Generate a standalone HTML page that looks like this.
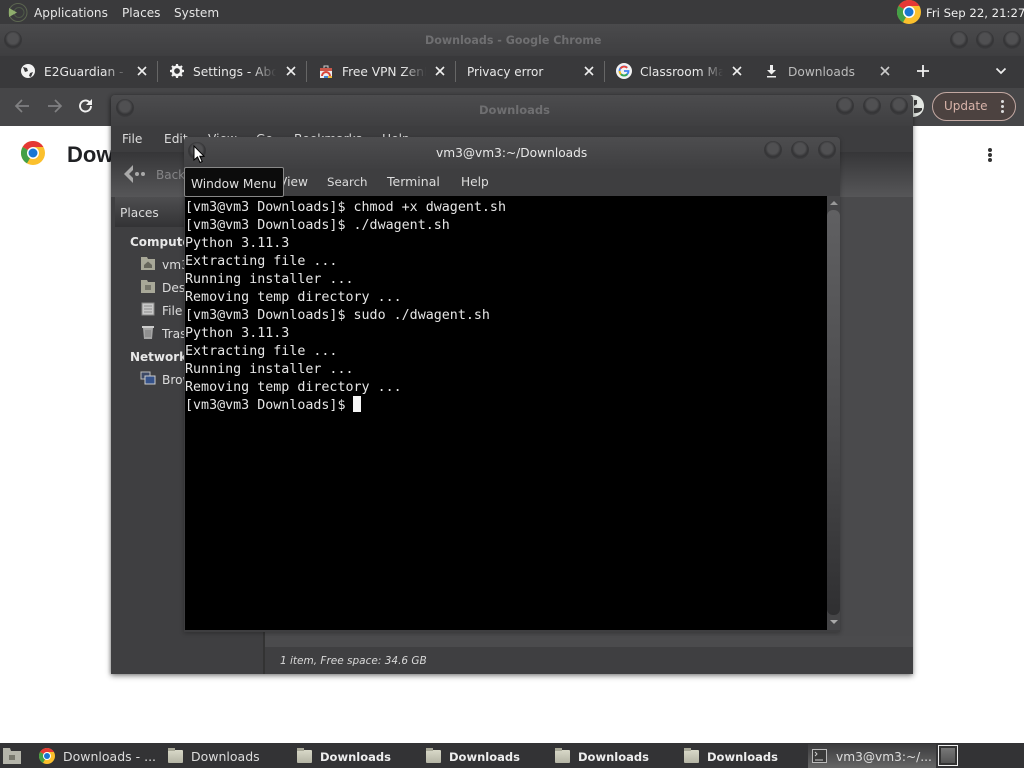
<!DOCTYPE html>
<html><head><meta charset="utf-8"><style>
html,body{margin:0;padding:0;width:1024px;height:768px;overflow:hidden;background:#fff}
body{position:relative;font-family:"Liberation Sans",sans-serif;color:#ddd;font-size:13.5px}
.a,.t{position:absolute}
.t{white-space:nowrap;line-height:18px;margin-top:1px;font-family:"DejaVu Sans",sans-serif;font-size:12px}
.btn{position:absolute;width:18px;height:18px;border-radius:50%;background:radial-gradient(circle at 50% 42%,#505052 0 38%,#343436 58%,#3c3c3e 74%,#4e4e50 100%)}
.tab{color:#e8e8e8;font-size:12.2px;overflow:hidden;-webkit-mask-image:linear-gradient(90deg,#000 70%,transparent 98%);mask-image:linear-gradient(90deg,#000 70%,transparent 98%)}
.x{position:absolute;top:64px;width:14px;height:14px}
.sep{position:absolute;top:61px;width:1px;height:21px;background:#666}
.term{position:absolute;left:185px;font:13.33px/18px "DejaVu Sans Mono",monospace;color:#e6e6e6;white-space:pre;width:640px;overflow:hidden}
.tb{color:#ddd;font-size:12.2px}
.bt{color:#ddd;font-size:12.5px}
.b{font-weight:bold;color:#eee;font-size:11.5px}
.fold{position:absolute;width:15px;height:13px;top:750px;background:linear-gradient(#d8d8c8,#b5b5a5);border-radius:1px}
.fold:before{content:"";position:absolute;left:0;top:-2px;width:7px;height:3px;background:#a8a898}
</style></head><body>

<!-- top panel -->
<div class="a" style="left:0;top:0;width:1024px;height:24px;background:#3a3a3c"></div>
<svg class="a" style="left:7px;top:2px" width="22" height="22" viewBox="0 0 22 22"><circle cx="11" cy="10.500" r="9" fill="none" stroke="#5c6650" stroke-width="1"/><circle cx="12" cy="10.500" r="5" fill="none" stroke="#4e5a48" stroke-width="1"/><path d="M2 6v9l8-4.500z" fill="#8fae6d"/></svg>
<div class="t" style="left:34px;top:3px;color:#e6e6e6;font-size:12.1px">Applications</div>
<div class="t" style="left:122px;top:3px;color:#e6e6e6;font-size:12.1px">Places</div>
<div class="t" style="left:174px;top:3px;color:#e6e6e6;font-size:12.1px">System</div>
<svg class="a" style="left:897px;top:0" width="24" height="24" viewBox="0 0 24 24"><circle cx="12" cy="12" r="12" fill="#fbc02d"/><path d="M12 12 1.600 6A12 12 0 0 1 22.400 6H12z" fill="#e53935"/><path d="M12 12 6 22.400A12 12 0 0 1 1.600 6z" fill="#43a047"/><circle cx="12" cy="12" r="6" fill="#fff"/><circle cx="12" cy="12" r="4.500" fill="#1976d2"/></svg>
<div class="t" style="left:926px;top:3px;color:#f0f0f0;font-size:11.7px">Fri Sep 22, 21:27</div>

<!-- chrome window -->
<div class="a" style="left:0;top:24px;width:1024px;height:36px;background:linear-gradient(#4a4a4c,#3d3d3f)"></div>
<div class="a" style="left:0;top:56px;width:1024px;height:32px;background:#39393b"></div>
<div class="a" style="left:0;top:88px;width:1024px;height:38px;background:#464648"></div>
<div class="btn" style="left:4px;top:31px"></div>
<div class="btn" style="left:950px;top:31px"></div>
<div class="btn" style="left:976px;top:31px"></div>
<div class="btn" style="left:1003px;top:31px"></div>
<div class="t" style="left:425px;top:31px;color:#6f6f71;font-weight:bold;font-size:11.1px">Downloads - Google Chrome</div>

<svg class="a" style="left:21px;top:64px" width="14" height="14" viewBox="0 0 14 14"><circle cx="7" cy="7" r="7" fill="#f2f2f2"/><path d="M2 3l4 1 1 3-3 1zM9 9l3-1-2 5-2-1z" fill="#39393b"/></svg>
<div class="t tab" style="left:44px;top:62px;width:86px">E2Guardian - About</div>
<svg class="x" style="left:135px" viewBox="0 0 14 14"><path d="M3 3l8 8M11 3l-8 8" stroke="#eee" stroke-width="1.600"/></svg>
<div class="sep" style="left:157px"></div>
<svg class="a" style="left:170px;top:64px" width="14" height="14" viewBox="0 0 14 14"><circle cx="7" cy="7" r="4.200" fill="none" stroke="#f2f2f2" stroke-width="2.600"/><path d="M7 0v2.500M7 11.500V14M0 7h2.500M11.500 7H14M2 2l2 2M10 10l2 2M12 2l-2 2M4 10l-2 2" stroke="#f2f2f2" stroke-width="2.200"/></svg>
<div class="t tab" style="left:193px;top:62px;width:85px">Settings - About</div>
<svg class="x" style="left:284px" viewBox="0 0 14 14"><path d="M3 3l8 8M11 3l-8 8" stroke="#eee" stroke-width="1.600"/></svg>
<div class="sep" style="left:306px"></div>
<svg class="a" style="left:319px;top:64px" width="14" height="15" viewBox="0 0 14 15"><path d="M1 4h12v10H1z" fill="#eee"/><path d="M1 4h12v3H1z" fill="#c9574a"/><path d="M3 12a4 4 0 0 1 8 0" fill="none" stroke="#d9453a" stroke-width="2"/><path d="M5 12h4v2H5z" fill="#3f84d8"/><path d="M9 12h4v2H9z" fill="#eab93d"/><path d="M5 4V2h4v2" fill="none" stroke="#ccc"/></svg>
<div class="t tab" style="left:342px;top:62px;width:86px">Free VPN ZenMate</div>
<svg class="x" style="left:433px" viewBox="0 0 14 14"><path d="M3 3l8 8M11 3l-8 8" stroke="#eee" stroke-width="1.600"/></svg>
<div class="sep" style="left:455px"></div>
<div class="t" style="left:467px;top:62px;color:#e8e8e8;font-size:12px">Privacy error</div>
<svg class="x" style="left:582px" viewBox="0 0 14 14"><path d="M3 3l8 8M11 3l-8 8" stroke="#eee" stroke-width="1.600"/></svg>
<div class="sep" style="left:604px"></div>
<svg class="a" style="left:616px;top:63px" width="16" height="16" viewBox="0 0 16 16"><circle cx="8" cy="8" r="8" fill="#f2f2f2"/><path d="M8 8h4.500a4.500 4.500 0 1 1-1.300-3.200" fill="none" stroke="#4285f4" stroke-width="1.800"/><path d="M4.500 5.500A4.500 4.500 0 0 1 11.200 4.800" fill="none" stroke="#ea4335" stroke-width="1.800"/><path d="M3.600 8a4.500 4.500 0 0 0 1.300 3.200" fill="none" stroke="#fbbc05" stroke-width="1.800"/><path d="M4.900 11.200a4.500 4.500 0 0 0 6.400 0" fill="none" stroke="#34a853" stroke-width="1.800"/></svg>
<div class="t tab" style="left:640px;top:62px;width:85px">Classroom Manager</div>
<svg class="x" style="left:730px" viewBox="0 0 14 14"><path d="M3 3l8 8M11 3l-8 8" stroke="#eee" stroke-width="1.600"/></svg>
<svg class="a" style="left:765px;top:64px" width="14" height="14" viewBox="0 0 14 14"><path d="M5 1h3v5h3L6.500 10.500 2 6h3zM2 12h9v1.500H2z" fill="#eee"/></svg>
<div class="t" style="left:788px;top:62px;color:#bcbcbc;font-size:12.2px">Downloads</div>
<svg class="x" style="left:878px" viewBox="0 0 14 14"><path d="M3 3l8 8M11 3l-8 8" stroke="#ccc" stroke-width="1.600"/></svg>
<svg class="a" style="left:916px;top:64px" width="14" height="14" viewBox="0 0 14 14"><path d="M7 1v12M1 7h12" stroke="#f0f0f0" stroke-width="1.800"/></svg>
<svg class="a" style="left:994px;top:65px" width="14" height="12" viewBox="0 0 14 12"><path d="M2.500 3.500 7 8l4.500-4.500" fill="none" stroke="#eee" stroke-width="1.700"/></svg>

<svg class="a" style="left:14px;top:98px" width="18" height="16" viewBox="0 0 18 16"><path d="M15 8H2M8 2 2 8l6 6" fill="none" stroke="#808082" stroke-width="1.700"/></svg>
<svg class="a" style="left:46px;top:98px" width="18" height="16" viewBox="0 0 18 16"><path d="M2 8h13M9 2l6 6-6 6" fill="none" stroke="#808082" stroke-width="1.700"/></svg>
<svg class="a" style="left:78px;top:98px" width="16" height="16" viewBox="0 0 16 16"><path d="M13 8a5.500 5.500 0 1 1-1.600-3.900" fill="none" stroke="#f0f0f0" stroke-width="1.900"/><path d="M14 1v6H8z" fill="#f0f0f0"/></svg>

<div class="a" style="left:932px;top:92px;width:82px;height:27px;border:1px solid #c2a8a2;border-radius:15px;background:#4c4240"></div>
<div class="t" style="left:944px;top:96px;color:#d9b4aa;font-size:12px">Update</div>
<div class="a" style="left:1001px;top:100px;width:3px;height:3px;border-radius:50%;background:#ddd;box-shadow:0 5px 0 #ddd,0 10px 0 #ddd"></div>
<div class="a" style="left:905px;top:95px;width:19px;height:22px;border-radius:0 11px 11px 0;background:#e4e8e4"></div>
<svg class="a" style="left:905px;top:96px" width="18" height="20" viewBox="0 0 18 20"><path d="M9 4h3v4l-3 2zM9 12h8v2a9 9 0 0 1-8 3z" fill="#3c3c3c"/></svg>

<!-- chrome page -->
<svg class="a" style="left:21px;top:141px" width="24" height="24" viewBox="0 0 24 24"><circle cx="12" cy="12" r="12" fill="#fbc02d"/><path d="M12 12 1.600 6A12 12 0 0 1 22.400 6H12z" fill="#e53935"/><path d="M12 12 6 22.400A12 12 0 0 1 1.600 6z" fill="#43a047"/><circle cx="12" cy="12" r="6" fill="#fff"/><circle cx="12" cy="12" r="4.500" fill="#1976d2"/></svg>
<div class="t" style="left:67px;top:143px;font:bold 22px/22px 'Liberation Sans',sans-serif;color:#202124">Dow</div>
<div class="a" style="left:988px;top:148px;width:4px;height:4px;border-radius:50%;background:#333;box-shadow:0 5px 0 #333,0 10px 0 #333"></div>

<!-- file manager -->
<div class="a" style="left:111px;top:95px;width:802px;height:579px;background:#464648;box-shadow:0 2px 6px rgba(0,0,0,.45),-1px 0 3px rgba(0,0,0,.2);border-radius:4px 4px 0 0"></div>
<div class="a" style="left:111px;top:95px;width:802px;height:31px;background:linear-gradient(#4c4c4e,#3f3f41);border-radius:4px 4px 0 0"></div>
<div class="a" style="left:111px;top:126px;width:802px;height:26px;background:#3d3d3f"></div>
<div class="a" style="left:111px;top:152px;width:802px;height:45px;background:linear-gradient(#363638,#565658)"></div>
<div class="a" style="left:111px;top:197px;width:153px;height:477px;background:#3f3f41"></div>
<div class="a" style="left:115px;top:197px;width:70px;height:30px;background:linear-gradient(#4e4e50,#333335)"></div>
<div class="a" style="left:264px;top:197px;width:649px;height:450px;background:#4a4a4c"></div>
<div class="a" style="left:263px;top:632px;width:2px;height:42px;background:#333"></div>
<div class="a" style="left:265px;top:647px;width:648px;height:27px;background:#3f3f41"></div>
<div class="a" style="left:265px;top:636px;width:648px;height:11px;background:#4b4b4d"></div>
<div class="btn" style="left:116px;top:99px"></div>
<div class="btn" style="left:836px;top:97px"></div>
<div class="btn" style="left:863px;top:97px"></div>
<div class="btn" style="left:890px;top:97px"></div>
<div class="t" style="left:479px;top:100px;color:#6f6f71;font-weight:bold;font-size:11.5px">Downloads</div>
<div class="t tb" style="left:122px;top:129px">File</div>
<div class="t tb" style="left:164px;top:129px">Edit</div>
<div class="t tb" style="left:208px;top:129px">View</div>
<div class="t tb" style="left:256px;top:129px">Go</div>
<div class="t tb" style="left:294px;top:129px">Bookmarks</div>
<div class="t tb" style="left:382px;top:129px">Help</div>
<svg class="a" style="left:122px;top:163px" width="26" height="22" viewBox="0 0 26 22"><path d="M11 2 2 11l9 9v-5l-4-4 4-4z" fill="#a9a9a9"/><circle cx="15" cy="11" r="2" fill="#a9a9a9"/><circle cx="21" cy="11" r="2" fill="#a9a9a9"/></svg>
<div class="t" style="left:156px;top:165px;color:#858587">Back</div>
<div class="t tb" style="left:120px;top:203px">Places</div>
<div class="t" style="left:130px;top:232px;font-weight:bold;color:#e8e8e8">Computer</div>
<div class="t" style="left:130px;top:347px;font-weight:bold;color:#e8e8e8">Network</div>
<div class="t tb" style="left:162px;top:255px">vm3</div>
<div class="t tb" style="left:162px;top:278px">Desktop</div>
<div class="t tb" style="left:162px;top:301px">File System</div>
<div class="t tb" style="left:162px;top:324px">Trash</div>
<div class="t tb" style="left:162px;top:370px">Browse</div>
<svg class="a" style="left:140px;top:256px" width="16" height="15" viewBox="0 0 16 15"><path d="M1 3V1h6l1 2h7v11H1z" fill="#a8a898"/><path d="M4 9l4-3.500L12 9v3H4z" fill="#66665c"/></svg>
<svg class="a" style="left:140px;top:279px" width="16" height="15" viewBox="0 0 16 15"><path d="M1 3V1h6l1 2h7v11H1z" fill="#a8a898"/><path d="M5 6h6v5H5z" fill="#77776c"/></svg>
<svg class="a" style="left:141px;top:302px" width="14" height="14" viewBox="0 0 14 14"><rect x="1" y="1" width="12" height="12" fill="#c8c8c8" stroke="#888"/><path d="M3 4h8M3 7h8M3 10h8" stroke="#8c8c8c"/></svg>
<svg class="a" style="left:141px;top:324px" width="14" height="16" viewBox="0 0 14 16"><path d="M1 2h12v2H1z" fill="#ccc"/><path d="M2 4h10l-1 11H3z" fill="#a5a5a5"/><path d="M5 6v7M7 6v7M9 6v7" stroke="#7c7c7c"/></svg>
<svg class="a" style="left:140px;top:371px" width="16" height="15" viewBox="0 0 16 15"><rect x="1" y="1" width="9" height="7" fill="#3e4a66" stroke="#bbb"/><rect x="5" y="5" width="10" height="8" fill="#35528a" stroke="#ccc"/></svg>
<div class="t" style="left:280px;top:651px;font-size:10.500px;font-style:italic;color:#d8d8d8">1 item, Free space: 34.6 GB</div>

<!-- terminal -->
<div class="a" style="left:184px;top:137px;width:656px;height:495px;background:#3e3e40;border-radius:4px 4px 0 0;box-shadow:0 1px 5px rgba(0,0,0,.3)"></div>
<div class="a" style="left:184px;top:137px;width:656px;height:32px;background:linear-gradient(#4d4d4f,#3f3f41);border-radius:4px 4px 0 0"></div>
<div class="btn" style="left:188px;top:142px"></div>
<div class="btn" style="left:764px;top:141px"></div>
<div class="btn" style="left:791px;top:141px"></div>
<div class="btn" style="left:818px;top:141px"></div>
<div class="t" style="left:436px;top:143px;color:#e8e8e8;font-size:12.2px">vm3@vm3:~/Downloads</div>
<div class="t tb" style="left:279px;top:172px">View</div>
<div class="t" style="left:327px;top:172px;color:#ddd;font-size:11.8px">Search</div>
<div class="t" style="left:387px;top:172px;color:#ddd;font-size:12.5px">Terminal</div>
<div class="t tb" style="left:461px;top:172px">Help</div>
<div class="a" style="left:185px;top:196px;width:642px;height:434px;background:#000"></div>
<div class="a" style="left:827px;top:196px;width:13px;height:434px;background:#454547"></div>
<div class="a" style="left:827px;top:210px;width:13px;height:405px;background:linear-gradient(#606062,#4a4a4c 55%,#2f2f31);border-radius:6px"></div>
<div class="a" style="left:830px;top:201px;width:0;height:0;border:4px solid transparent;border-top:0;border-bottom:4px solid #999"></div>
<div class="a" style="left:830px;top:620px;width:0;height:0;border:4px solid transparent;border-bottom:0;border-top:4px solid #aaa"></div>
<div class="term" style="top:199px">[vm3@vm3 Downloads]$ chmod +x dwagent.sh
[vm3@vm3 Downloads]$ ./dwagent.sh
Python 3.11.3
Extracting file ...
Running installer ...
Removing temp directory ...
[vm3@vm3 Downloads]$ sudo ./dwagent.sh
Python 3.11.3
Extracting file ...
Running installer ...
Removing temp directory ...
[vm3@vm3 Downloads]$ </div>
<div class="a" style="left:353px;top:396px;width:8px;height:16px;background:#f5f5f5"></div>

<!-- tooltip -->
<div class="a" style="left:184px;top:167px;width:98px;height:28px;background:#0c0c0c;border:1px solid #888;border-radius:2px"></div>
<div class="t" style="left:191px;top:174px;color:#e0e0e0;font-size:12.2px">Window Menu</div>
<svg class="a" style="left:193px;top:145px" width="13" height="19" viewBox="0 0 13 19"><path d="M1 1v14l3.500-3 2.500 5.500 2.200-1-2.400-5.300H11z" fill="#fff" stroke="#000" stroke-width="1"/></svg>

<!-- bottom panel -->
<div class="a" style="left:0;top:743px;width:1024px;height:25px;background:#333335"></div>
<svg class="a" style="left:2px;top:747px" width="20" height="18" viewBox="0 0 20 18"><path d="M1 4V1h7l1 3h10v13H1z" fill="#b5b5aa"/><path d="M7 8h6v5H7z" fill="#77776c"/></svg>
<svg class="a" style="left:39px;top:748px" width="16" height="16" viewBox="0 0 24 24"><circle cx="12" cy="12" r="12" fill="#fbc02d"/><path d="M12 12 1.600 6A12 12 0 0 1 22.400 6H12z" fill="#e53935"/><path d="M12 12 6 22.400A12 12 0 0 1 1.600 6z" fill="#43a047"/><circle cx="12" cy="12" r="6" fill="#fff"/><circle cx="12" cy="12" r="4.500" fill="#1976d2"/></svg>
<div class="t bt" style="left:63px;top:747px">Downloads - ...</div>
<div class="fold" style="left:168px"></div><div class="t bt" style="left:191px;top:747px">Downloads</div>
<div class="fold" style="left:297px"></div><div class="t b" style="left:320px;top:747px">Downloads</div>
<div class="fold" style="left:426px"></div><div class="t b" style="left:449px;top:747px">Downloads</div>
<div class="fold" style="left:555px"></div><div class="t b" style="left:578px;top:747px">Downloads</div>
<div class="fold" style="left:684px"></div><div class="t b" style="left:707px;top:747px">Downloads</div>
<div class="a" style="left:808px;top:744px;width:128px;height:24px;background:linear-gradient(#3b3b3d,#666)"></div>
<svg class="a" style="left:812px;top:749px" width="15" height="14" viewBox="0 0 15 14"><rect x="0.500" y="0.500" width="14" height="13" fill="#3a3a3a" stroke="#bbb"/><path d="M3 3l2 2-2 2M3 11h8" stroke="#ccc" fill="none"/></svg>
<div class="t tb" style="left:836px;top:747px">vm3@vm3:~/...</div>
<div class="a" style="left:938px;top:745px;width:20px;height:21px;border:1px solid #eee;background:#333;box-sizing:border-box"></div>
<div class="a" style="left:941px;top:748px;width:14px;height:15px;background:linear-gradient(#777,#555)"></div>
</body></html>
